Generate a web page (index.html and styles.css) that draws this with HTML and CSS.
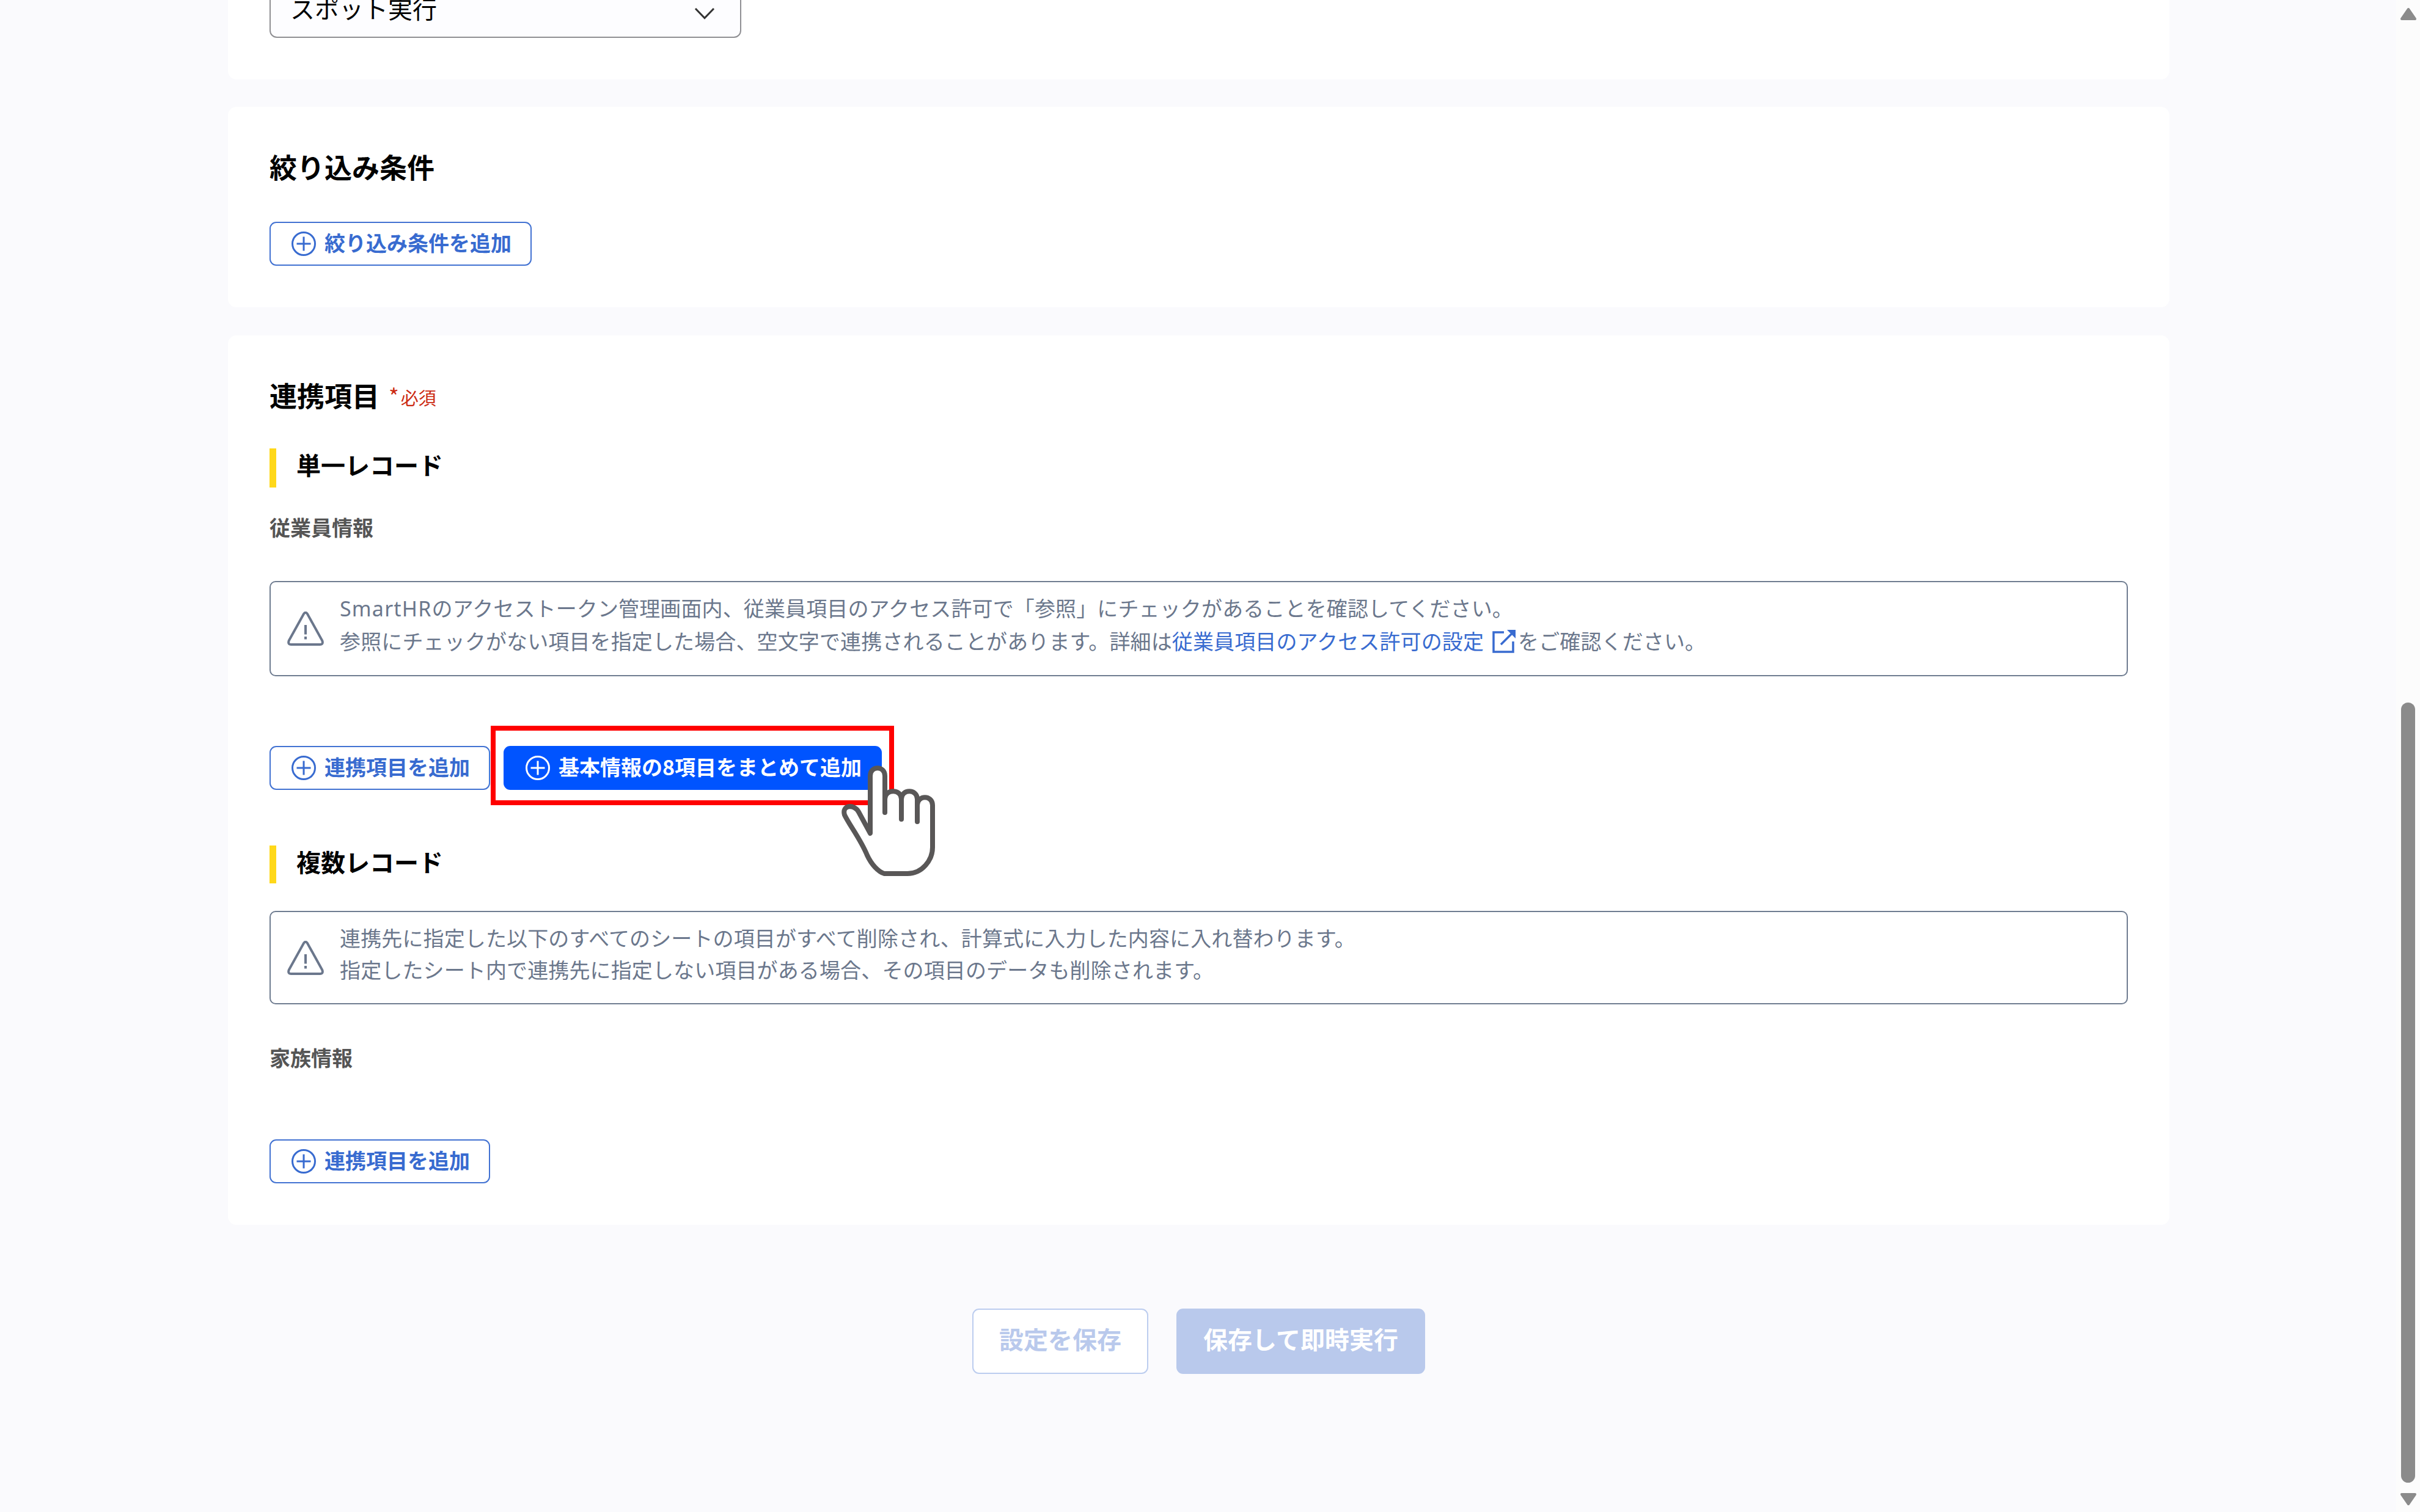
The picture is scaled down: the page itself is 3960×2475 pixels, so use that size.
FILE: index.html
```html
<!DOCTYPE html>
<html lang="ja">
<head>
    <meta charset="UTF-8">
    <meta name="viewport" content="width=device-width, initial-scale=1.0">
    <title>連携設定</title>
    <link rel="stylesheet" href="styles.css">
</head>
<body>
    <svg class="defs" width="0" height="0">
        <symbol id="icon-plus" viewBox="0 0 40 40">
            <circle cx="20" cy="20" r="18.5"/>
            <path d="M20 8.500v23M8.500 20h23"/>
        </symbol>
        <symbol id="icon-warning" viewBox="0 0 60 56">
            <path d="M27.200 3.600 Q30 -0.200 32.800 3.600 L57.200 47.500 Q59.500 54 53.500 54 H6.500 Q0.500 54 2.800 47.500 Z"/>
            <path d="M30 22v15.500M30 41v4.500"/>
        </symbol>
    </svg>

    <main class="container">
        <section class="card card-top">
            <div class="select">
                <span>スポット実行</span>
                <svg class="chevron" viewBox="0 0 34 20"><path d="M2 2l15 15.500L32 2"/></svg>
            </div>
        </section>

        <section class="card">
            <h2>絞り込み条件</h2>
            <button class="btn"><svg class="icon"><use href="#icon-plus"/></svg><span>絞り込み条件を追加</span></button>
        </section>

        <section class="card">
            <h2>連携項目<span class="required"><span class="asterisk">*</span>必須</span></h2>

            <h3>単一レコード</h3>
            <h4>従業員情報</h4>
            <div class="alert alert-single">
                <svg class="icon-warning"><use href="#icon-warning"/></svg>
                <p><span class="latin">SmartHR</span>のアクセストークン管理画面内、従業員項目のアクセス許可で「参照」にチェックがあることを確認してください。<br>参照にチェックがない項目を指定した場合、空文字で連携されることがあります。詳細は<a href="#">従業員項目のアクセス許可の設定<svg class="icon-link" viewBox="0 0 38 38"><path d="M19 4H2v32h32V19"/><path d="M14 24L34 4"/><path class="fill" d="M24 0h14v14z"/></svg></a>をご確認ください。</p>
            </div>
            <div class="actions">
                <button class="btn"><svg class="icon"><use href="#icon-plus"/></svg><span>連携項目を追加</span></button>
                <div class="highlight">
                    <button class="btn btn-primary"><svg class="icon"><use href="#icon-plus"/></svg><span>基本情報の8項目をまとめて追加</span></button>
                    <svg class="cursor" viewBox="0 0 156 182">
                        <path d="M48 111V17C48 0 72 0 72 17V77V55C72 38 99 38 99 55V88V55C99 38 125 38 125 55V92V65C125 48 150 48 150 65V134C150 155 133 177 109 177H71C61 174 50 162 43 147C33 122 13 96 6 81C1 64 22 63 29 76Z"/>
                    </svg>
                </div>
            </div>

            <h3 class="multi">複数レコード</h3>
            <div class="alert alert-multi">
                <svg class="icon-warning"><use href="#icon-warning"/></svg>
                <p>連携先に指定した以下のすべてのシートの項目がすべて削除され、計算式に入力した内容に入れ替わります。<br>指定したシート内で連携先に指定しない項目がある場合、その項目のデータも削除されます。</p>
            </div>
            <h4 class="family">家族情報</h4>
            <button class="btn"><svg class="icon"><use href="#icon-plus"/></svg><span>連携項目を追加</span></button>
        </section>

        <div class="footer">
            <button class="save">設定を保存</button>
            <button class="save save-run">保存して即時実行</button>
        </div>
    </main>

    <div class="scrollbar">
        <svg class="arrow" viewBox="0 0 28 22"><path d="M14 3L25 19H3z"/></svg>
        <div class="thumb"></div>
        <svg class="arrow" viewBox="0 0 28 22"><path d="M3 3h22L14 19z"/></svg>
    </div>
</body>
</html>
```
FILE: styles.css
```css
*, *::before {
    box-sizing: border-box;
    margin: 0;
    padding: 0;
}
body {
    display: flex;
    justify-content: space-between;
    height: 2475px;
    overflow: hidden;
    background: #fafafd;
    color: #000;
    font-family: 'Noto Sans CJK JP', sans-serif;
    font-size: 34px;
}
svg {
    fill: none;
    stroke: currentColor;
    flex-shrink: 0;
}
.defs {
    position: absolute;
}
.container {
    width: 3177px;
    margin-left: 373px;
}
.card {
    background: #fff;
    border-radius: 14px;
    padding: 64px 68px 68px 68px;
    margin-bottom: 46px;
}
.card-top {
    display: flex;
    align-items: flex-end;
    height: 130px;
    padding-top: 0;
    margin-bottom: 45px;
    border-radius: 0 0 14px 14px;
}
.select {
    display: flex;
    flex-shrink: 0;
    align-items: center;
    justify-content: space-between;
    width: 772px;
    height: 98px;
    padding: 0 41px 0 32px;
    border: 2px solid #8f8f93;
    border-radius: 12px;
    background: #fdfdff;
    font-size: 40px;
}
.chevron {
    width: 34px;
    height: 20px;
    margin-top: 18px;
    stroke: #333;
    stroke-width: 3;
}
h2 {
    height: 68px;
    font-size: 45px;
    line-height: 68px;
}
.required {
    display: inline-block;
    margin-left: 15px;
    color: #cc2a12;
    font-size: 29px;
    font-weight: 400;
    line-height: 40px;
    vertical-align: 3px;
}
.asterisk {
    margin-right: 3px;
    font-size: 36px;
    line-height: 1;
}
h3 {
    height: 64px;
    margin-top: 53px;
    padding-left: 33px;
    border-left: 11px solid #ffd81a;
    font-size: 40px;
    line-height: 52px;
}
h3.multi {
    height: 62px;
    margin-top: 91px;
}
h4 {
    margin-top: 39px;
    color: #555;
    line-height: 52px;
}
h4.family {
    margin-top: 61px;
}
.btn {
    display: flex;
    align-items: center;
    gap: 14px;
    height: 72px;
    padding: 0 31px 0 34px;
    border: 2px solid #4272d2;
    border-radius: 11px;
    background: #fff;
    color: #386bd0;
    font: bold 34px/52px 'Noto Sans CJK JP', sans-serif;
    white-space: nowrap;
}
.btn span {
    padding-bottom: 4px;
}
h2 + .btn {
    margin-top: 56px;
}
h4 + .btn {
    margin-top: 108px;
}
.icon {
    width: 40px;
    height: 40px;
    stroke-width: 3;
}
.btn-primary {
    border-color: #0054ff;
    background: #0054ff;
    color: #fff;
}
.alert {
    display: flex;
    align-items: center;
    border: 2px solid #6f7c90;
    border-radius: 10px;
    padding-left: 27px;
    color: #6b778c;
    font-family: 'Noto Sans', 'Noto Sans CJK JP', sans-serif;
    letter-spacing: 0.13px;
}
.alert-single {
    height: 156px;
    margin-top: 62px;
    line-height: 53.5px;
}
.alert-multi {
    height: 153px;
    margin-top: 45px;
    line-height: 52px;
}
.alert p {
    align-self: flex-start;
    margin: 17px 0 0 26px;
}
.latin {
    letter-spacing: 1.2px;
}
.icon-warning {
    width: 60px;
    height: 56px;
    stroke-width: 4;
}
.alert a {
    color: #386bd0;
    text-decoration: none;
}
.icon-link {
    width: 38px;
    height: 38px;
    margin: 0 4px 0 14px;
    vertical-align: -6px;
    stroke-width: 3.5;
}
.icon-link .fill {
    fill: currentColor;
    stroke: none;
}
.actions {
    display: flex;
    gap: 22px;
    margin-top: 114px;
}
.highlight {
    position: relative;
}
/* red frame around the bulk add button */
.highlight::before {
    content: '';
    position: absolute;
    top: -33px;
    left: -21px;
    width: 660px;
    height: 130px;
    border: 8px solid #f00;
}
.cursor {
    position: absolute;
    left: 552px;
    top: 32px;
    width: 156px;
    height: 182px;
    fill: #fff;
    stroke: #595757;
    stroke-width: 8;
    stroke-linejoin: round;
}
.footer {
    display: flex;
    justify-content: center;
    gap: 46px;
    margin-top: 137px;
}
.save {
    height: 107px;
    padding: 0 42px 9px;
    border: 2px solid #bccdef;
    border-radius: 11px;
    background: #fff;
    color: #b9c9ec;
    font: bold 40px/60px 'Noto Sans CJK JP', sans-serif;
}
.save-run {
    border-color: #b9c9ec;
    background: #b9c9ec;
    color: #fff;
}
.scrollbar {
    display: flex;
    flex-direction: column;
    align-items: center;
    width: 39px;
    padding: 12px 0 10px;
    background: #fcfcfc;
}
.arrow {
    width: 28px;
    height: 22px;
    fill: #8b8b8b;
    stroke: #8b8b8b;
    stroke-width: 4;
    stroke-linejoin: round;
}
.thumb {
    width: 23px;
    height: 1277px;
    margin: auto 0 16px;
    border-radius: 12px;
    background: #8b8b8b;
}
```
